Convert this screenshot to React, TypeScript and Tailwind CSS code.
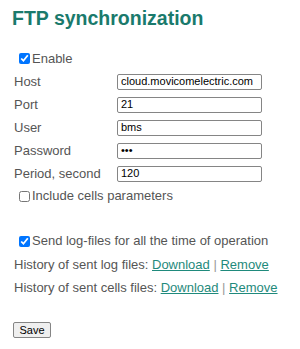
import * as React from "react";

type Field = { label: string; value: string; type?: string };

const fields: Field[] = [
  { label: "Host", value: "cloud.movicomelectric.com" },
  { label: "Port", value: "21" },
  { label: "User", value: "bms" },
  { label: "Password", value: "pas", type: "password" },
  { label: "Period, second", value: "120" },
];

function Check({ label, checked }: { label: string; checked?: boolean }) {
  return (
    <label className="flex items-center h-full">
      <input
        type="checkbox"
        defaultChecked={checked}
        className="ml-[5px] mr-[2px] w-[11px] h-[11px] m-0 accent-[#0075ff]"
      />
      <span>{label}</span>
    </label>
  );
}

function Links() {
  return (
    <>
      <a href="#" className="text-[#1f8a7c] underline">Download</a>
      <span className="text-[#999]"> | </span>
      <a href="#" className="text-[#1f8a7c] underline">Remove</a>
    </>
  );
}

export default function App() {
  return (
    <div className="w-[300px] h-[349px] bg-white pl-[14px] pt-[7px] text-[13px] text-[#555] font-['Liberation_Sans',Arial,sans-serif]">
      <h1 className="-ml-[2px] text-[19.5px] font-bold text-[#1a7a6c] leading-[22px]">
        FTP synchronization
      </h1>

      <div className="mt-[18px] flex flex-col">
        <div className="h-[23px]">
          <Check label="Enable" checked />
        </div>
        {fields.map((f) => (
          <div key={f.label} className="h-[23px] flex items-center">
            <span className="w-[103px]">{f.label}</span>
            <input
              type={f.type ?? "text"}
              defaultValue={f.value}
              className="w-[145px] h-[16px] border border-[#858585] rounded-[2px] px-[3px] text-[11px] text-black outline-none"
            />
          </div>
        ))}
        <div className="h-[22px]">
          <Check label="Include cells parameters" />
        </div>
      </div>

      <div className="mt-[22px] flex flex-col">
        <div className="h-[24px]">
          <Check label="Send log-files for all the time of operation" checked />
        </div>
        <div className="h-[23px] flex items-center">
          <span>
            History of sent log files: <Links />
          </span>
        </div>
        <div className="h-[23px] flex items-center">
          <span>
            History of sent cells files: <Links />
          </span>
        </div>
      </div>

      <button className="mt-[23px] -ml-[1px] h-[16px] w-[38px] border border-[#858585] rounded-[2px] bg-[#efefef] text-[11px] text-black leading-none">
        Save
      </button>
    </div>
  );
}
